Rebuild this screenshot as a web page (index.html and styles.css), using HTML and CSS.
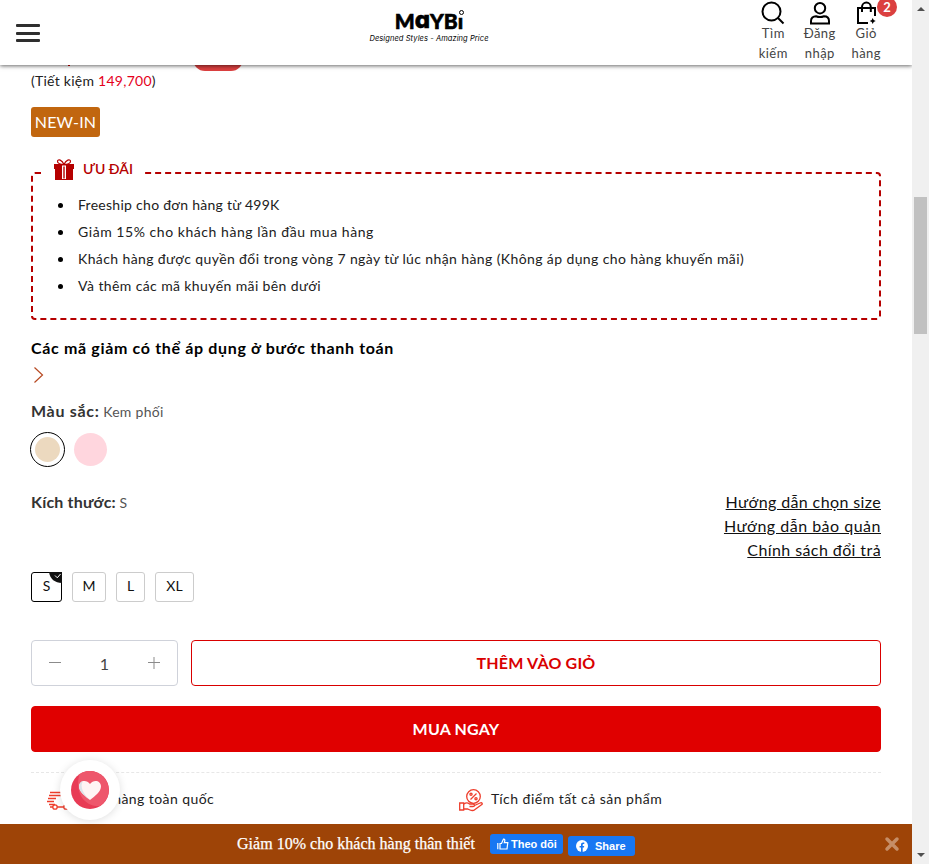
FILE: index.html
```html
<!DOCTYPE html>
<html lang="vi">
<head>
<meta charset="utf-8">
<title>MAYBi</title>
<link rel="stylesheet" href="styles.css">
</head>
<body>
<div class="window">
<div class="page">
  <header class="header">
    <div class="menu"><i></i><i></i><i></i></div>
    <div class="brand">
      <div class="brand-name"><span>M</span><span class="brand-a">ɑ</span><span>YB</span><span class="brand-i">ı<b></b></span></div>
      <div class="brand-tag">Designed Styles - Amazing Price</div>
    </div>
    <nav class="actions">
      <a class="action"><svg width="24" height="24" viewBox="0 0 24 24"><circle cx="10.500" cy="10.500" r="9" /><path d="M17 17l5.500 5.500"/></svg><span>Tìm</span><span>kiếm</span></a>
      <a class="action"><svg width="24" height="24" viewBox="0 0 24 24"><circle cx="12" cy="7.200" r="5.200"/><path d="M3 22.500v-2.500c0-3 2-4.800 5-4.800q4 1.600 8 0c3 0 5 1.800 5 4.800v2.500z"/></svg><span>Đăng</span><span>nhập</span></a>
      <a class="action"><svg width="24" height="24" viewBox="0 0 24 24"><path d="M14 22H4V7h17v8M8 11V6a4.400 4.400 0 0 1 8.800 0V11"/><path class="fill" d="M18.700 17q.5 2.500 3 3-2.500.5-3 3-.5-2.500-3-3 2.500-.5 3-3z"/></svg><span>Giỏ</span><span>hàng</span><em class="count">2</em></a>
    </nav>
  </header>
  <main class="product">
    <div class="price"><i class="price-dot"></i><i class="discount"></i></div>
    <div class="saving">(Tiết kiệm <b>149,700</b>)</div>
    <div class="tag">NEW-IN</div>
    <fieldset class="offers">
      <legend><svg width="20" height="22" viewBox="0 0 20 22"><path class="bow" d="M10 5.500C7 5.500 3 4.500 3.500 2.200S8 .5 10 5.500c2-5 6-5.600 6.500-3.300S13 5.500 10 5.500z"/><path d="M0 5h20v5H0zM1 9.500h18V21H1z"/><path class="ribbon" d="M8 6.500h4V20H8z"/><path d="M9.300 7.500h1.400v12H9.300z"/></svg><span>ƯU ĐÃI</span></legend>
      <ul>
        <li class="t1">Freeship cho đơn hàng từ 499K</li>
        <li class="t2">Giảm 15% cho khách hàng lần đầu mua hàng</li>
        <li class="t3">Khách hàng được quyền đổi trong vòng 7 ngày từ lúc nhận hàng (Không áp dụng cho hàng khuyến mãi)</li>
        <li class="t4">Và thêm các mã khuyến mãi bên dưới</li>
      </ul>
    </fieldset>
    <h2 class="codes">Các mã giảm có thể áp dụng ở bước thanh toán</h2>
    <div class="next"><svg width="14" height="18" viewBox="0 0 14 18"><path d="M3.500 1.500l8 7.500-8 7.500"/></svg></div>
    <div class="label"><b class="l1">Màu sắc:</b> <span class="v1">Kem phối</span></div>
    <div class="swatches"><i class="swatch cream"></i><i class="swatch pink"></i></div>
    <div class="size-head">
      <div class="label"><b class="l2">Kích thước:</b> <span>S</span></div>
      <div class="guides"><a class="g1">Hướng dẫn chọn size</a><a class="g2">Hướng dẫn bảo quản</a><a class="g3">Chính sách đổi trả</a></div>
    </div>
    <div class="sizes">
      <span class="size s on">S<svg class="corner" width="13" height="11" viewBox="0 0 13 11"><path d="M0 0h13v11C6 11 1 7 0 0z"/><path class="check" d="M6 3.500l2.300 2.300L11.500 2"/></svg></span>
      <span class="size m">M</span><span class="size l">L</span><span class="size xl">XL</span>
    </div>
    <div class="buy-row">
      <div class="qty"><svg width="12" height="12" viewBox="0 0 12 12"><path d="M0 5.500h12"/></svg><span>1</span><svg width="12" height="12" viewBox="0 0 12 12"><path d="M0 5.500h12M6 0v12"/></svg></div>
      <button class="add">THÊM VÀO GIỎ</button>
    </div>
    <button class="buy">MUA NGAY</button>
    <div class="perks">
      <div class="perk"><svg width="24" height="24" viewBox="0 0 24 24"><path d="M3 3.500h13M2 6.500h14M1 9.500h8M0 12.500h7M2 15.500h6M3 18h3M10 18h7"/><circle cx="8" cy="18" r="2.200"/><circle cx="19" cy="18" r="2.200"/></svg><span class="p1">Giao hàng toàn quốc</span></div>
      <div class="perk"><svg width="24" height="24" viewBox="0 0 24 24"><circle cx="14.500" cy="7.500" r="6.800"/><path d="M11.500 10.500l6-6M.7 14h4v7h-4zM5 15c2-1.700 4-1.300 5.500 0h3.500c2 0 2 2.500 0 2.500h-3.500M15.500 16.500l5.500-2.500c2-.8 3 .7 1.500 1.800L16 20.500c-1.500 1.300-3 1.300-5 .5l-2.500-1H5"/><circle cx="12" cy="5.300" r="1.100"/><circle cx="17" cy="9.700" r="1.100"/></svg><span class="p2">Tích điểm tất cả sản phẩm</span></div>
    </div>
  </main>
  <div class="heart"><svg width="38" height="38" viewBox="0 0 38 38"><circle cx="19" cy="19" r="19" fill="#e83b55"/><path d="M8.500 3A19 19 0 1 1 29 35C14 36 3 22 8.500 3z" fill="#ee576c"/><path d="M19 29C14 25 8 20.500 8 15.500 8 9.500 15.500 8 19 13c3.500-5 11-3.500 11 2.500C30 20.500 24 25 19 29z" fill="#fff4f4"/><path d="M19 29C14 25 8 20.500 8 15.500c0-2.500 1.500-5 4-5.300-4 5 1 13.800 7 18.800z" fill="#dde3e9"/></svg></div>
  <footer class="promo">
    <span class="promo-text">Giảm 10% cho khách hàng thân thiết</span>
    <span class="fb follow"><svg width="12" height="12" viewBox="0 0 12 12"><path d="M.8 5v6.200M3 11V5.500h1.500L6.500 1c1.500 0 1.700 1.200.8 3.700h3.500L10 11z"/></svg><span>Theo dõi</span></span>
    <span class="fb share"><svg width="12" height="12" viewBox="0 0 12 12"><circle cx="6" cy="6" r="6"/><path d="M5 12V7.600H3.600V6H5V4.700C5 3.200 5.900 2.500 7.100 2.500l1.200.1V4h-.7c-.7 0-.9.4-.9.900V6h1.500L8 7.600H6.700V12z"/></svg><span>Share</span></span>
    <svg class="close" width="16" height="16" viewBox="0 0 16 16"><path d="M3 3l10 10M13 3L3 13"/></svg>
  </footer>
</div>
<div class="scrollbar"><i class="up"></i><i class="thumb"></i><i class="down"></i></div>
</div>
</body>
</html>
```
FILE: styles.css
```css
* { box-sizing: border-box; }
body { margin: 0; background: #fff; font: 14px/21px Lato, "Open Sans", sans-serif; color: #212121; }
svg { display: block; flex: none; fill: none; }
i, em { font-style: normal; display: block; }
.window { display: flex; width: 929px; height: 864px; overflow: hidden; }
.page { position: relative; width: 912px; height: 864px; display: flex; flex-direction: column; }

.header { position: relative; z-index: 2; height: 65px; flex: none; background: #fff; box-shadow: 0 1px 4px rgba(0,0,0,.6); clip-path: inset(0 0 -10px 0); display: flex; padding: 0 22.500px 0 16px; }
.menu { width: 24px; height: 18px; margin-top: 24px; display: flex; flex-direction: column; justify-content: space-between; }
.menu i { height: 3px; border-radius: 1px; background: #2e2e2e; }
.brand { width: 120px; margin: 10px 0 0 329px; text-align: center; color: #000; }
.brand-name { display: flex; justify-content: center; height: 23px; font: 900 21px/22px Lato, sans-serif; -webkit-text-stroke: .6px #000; letter-spacing: 0; }
.brand-a { font: 800 24px/20px Inter, sans-serif; }
.brand-i { position: relative; }
.brand-i b { position: absolute; left: 1px; top: 0; width: 5px; height: 5px; border: 1px solid #000; border-radius: 50%; }
.brand-tag { font: italic 400 7.500px/11px Inter, sans-serif; letter-spacing: .08px; white-space: nowrap; }
.actions { display: flex; margin-left: auto; }
.action { position: relative; display: flex; flex-direction: column; align-items: center; width: 46.500px; padding-top: 1px; font-size: 13px; line-height: 20px; letter-spacing: .45px; color: #444; }
.action svg { stroke: #000; stroke-width: 2; margin-bottom: -2px; }
.action .fill { fill: #000; stroke: none; }
.count { position: absolute; left: 34px; top: -3px; width: 20px; height: 20px; border-radius: 50%; background: #db4040; color: #fff; font-weight: 700; text-align: center; font-size: 13px; letter-spacing: 0; }

.product { height: 759px; flex: none; overflow: hidden; padding: 0 31px; }
.price { height: 6px; display: flex; }
.price-dot { width: 2px; height: 1px; margin-left: 37px; background: #d00000; }
.discount { width: 50px; height: 24px; margin: -18px 0 0 123px; border-radius: 12px; background: #db4040; }
.saving { height: 21px; line-height: 19px; letter-spacing: .26px; }
.saving b { font-weight: 400; color: #e5001b; }
.tag { width: 69px; height: 30px; margin-top: 15px; border-radius: 3px; background: #c1660f; color: #fff; font-size: 16px; line-height: 30px; letter-spacing: .15px; text-align: center; }
.offers { width: 850px; height: 159px; margin: 24px 0 0; padding: 6px 0 0 45px; border: 2px dashed #b50000; border-radius: 4px; }
.offers legend { display: flex; align-items: center; height: 24px; width: 103px; margin-left: -37px; padding: 0 0 0 13px; gap: 9px; color: #b50000; font-weight: 600; }
.offers legend svg { fill: #b50000; margin-top: -6px; }
.offers legend span { margin-top: -10px; }
.offers .bow { fill: none; stroke: #b50000; stroke-width: 1.200; }
.offers .ribbon { fill: #fff; }
.offers ul { margin: 0; padding: 0; list-style: none; }
.offers li { position: relative; line-height: 27px; white-space: nowrap; }
.offers li::before { content: ""; position: absolute; left: -20px; top: 12px; width: 5px; height: 5px; border-radius: 50%; background: #000; }
.t1 { letter-spacing: .28px; }
.t2 { letter-spacing: .55px; }
.t3 { letter-spacing: .39px; }
.t4 { letter-spacing: .39px; }
.codes { margin: 16px 0 0; font-size: 16px; line-height: 24px; letter-spacing: .66px; color: #000; }
.next { height: 39px; padding-top: 6px; }
.next svg { stroke: #b74a22; stroke-width: 1.200; }
.label { height: 24px; line-height: 24px; color: #555; white-space: nowrap; }
.label b { font-size: 16px; color: #333; }
.l1 { letter-spacing: .7px; }
.v1 { letter-spacing: .3px; }
.l2 { letter-spacing: .18px; }
.swatches { display: flex; align-items: center; gap: 9px; height: 35px; margin: 9px 0 0 -1px; }
.swatch { border-radius: 50%; width: 33px; height: 33px; }
.cream { width: 35px; height: 35px; border: 1px solid #000; padding: 4px; background: #ecd9bf content-box; background-clip: content-box; }
.pink { background: #ffd6de; }
.size-head { display: flex; justify-content: space-between; height: 72px; margin-top: 23px; }
.guides { display: flex; flex-direction: column; align-items: flex-end; font-size: 16px; line-height: 24px; color: #111; }
.guides a { text-decoration: underline; }
.g1 { letter-spacing: .38px; }
.g2 { letter-spacing: .5px; }
.g3 { letter-spacing: .41px; }
.sizes { display: flex; gap: 10px; margin-top: 10px; }
.size { position: relative; height: 30px; border: 1px solid #ccc; border-radius: 3px; line-height: 26px; text-align: center; color: #111; }
.s { width: 31px; } .m { width: 34px; } .l { width: 29px; } .xl { width: 39px; }
.on { border-color: #000; }
.corner { position: absolute; right: -1px; top: -1px; fill: #111; }
.check { fill: none; stroke: #fff; }
.buy-row { display: flex; gap: 13px; margin-top: 38px; height: 46px; }
.qty { width: 147px; border: 1px solid #cfd2da; border-radius: 4px; display: flex; align-items: center; justify-content: space-between; padding: 0 17px; font-size: 16px; color: #444; }
.qty svg { stroke: #8b8b8b; }
button { display: block; padding: 0; border: 1px solid #d90000; border-radius: 4px; font: 700 16px/24px Lato, sans-serif; letter-spacing: .2px; }
.add { flex: 1; background: #fff; color: #d90000; }
.buy { width: 850px; height: 46px; margin-top: 20px; background: #e00000; border-color: #e00000; color: #fff; }
.perks { display: flex; margin-top: 20px; border-top: 1px dashed #e7e7e7; padding: 13px 0 0 16px; }
.perk { width: 412px; height: 24px; display: flex; align-items: center; gap: 8px; white-space: nowrap; }
.perk svg { stroke: #ee3e2c; stroke-width: 1.300; margin-top: 5px; }
.p1 { letter-spacing: .43px; }
.p2 { letter-spacing: .48px; }

.heart { position: absolute; z-index: 3; left: 60px; top: 760px; width: 60px; height: 60px; border-radius: 50%; background: #fff; box-shadow: 0 1px 8px rgba(0,0,0,.13); padding: 11px; }
.promo { position: relative; height: 40px; background: #9e4407; display: flex; align-items: flex-start; padding-left: 237px; color: #fff; }
.promo-text { width: 253px; font: 16px/40px "Liberation Serif", serif; letter-spacing: .02px; -webkit-text-stroke: .25px #fff; white-space: nowrap; }
.fb { display: flex; align-items: center; height: 20px; border-radius: 3px; background: #1877f2; font: 700 11px/20px "Liberation Sans", sans-serif; white-space: nowrap; }
.follow { width: 73px; margin: 10px 5px 0 0; padding-left: 7px; gap: 2px; }
.follow svg { stroke: #fff; stroke-width: 1.200; }
.share { width: 67px; margin-top: 12px; padding-left: 8px; gap: 7px; }
.share circle { fill: #fff; }
.share path { fill: #1877f2; }
.close { margin: 12px 12px 0 auto; stroke: #c68e67; stroke-width: 3.500; stroke-linecap: round; }

.scrollbar { width: 17px; height: 864px; background: #f0f0f0; display: flex; flex-direction: column; align-items: center; padding: 7px 0; }
.up { border: 4px solid transparent; border-top: 0; border-bottom: 4px solid #505050; }
.thumb { width: 13px; height: 137px; margin-top: 186px; background: #c1c1c1; }
.down { margin-top: auto; border: 4px solid transparent; border-bottom: 0; border-top: 4px solid #505050; }
```
